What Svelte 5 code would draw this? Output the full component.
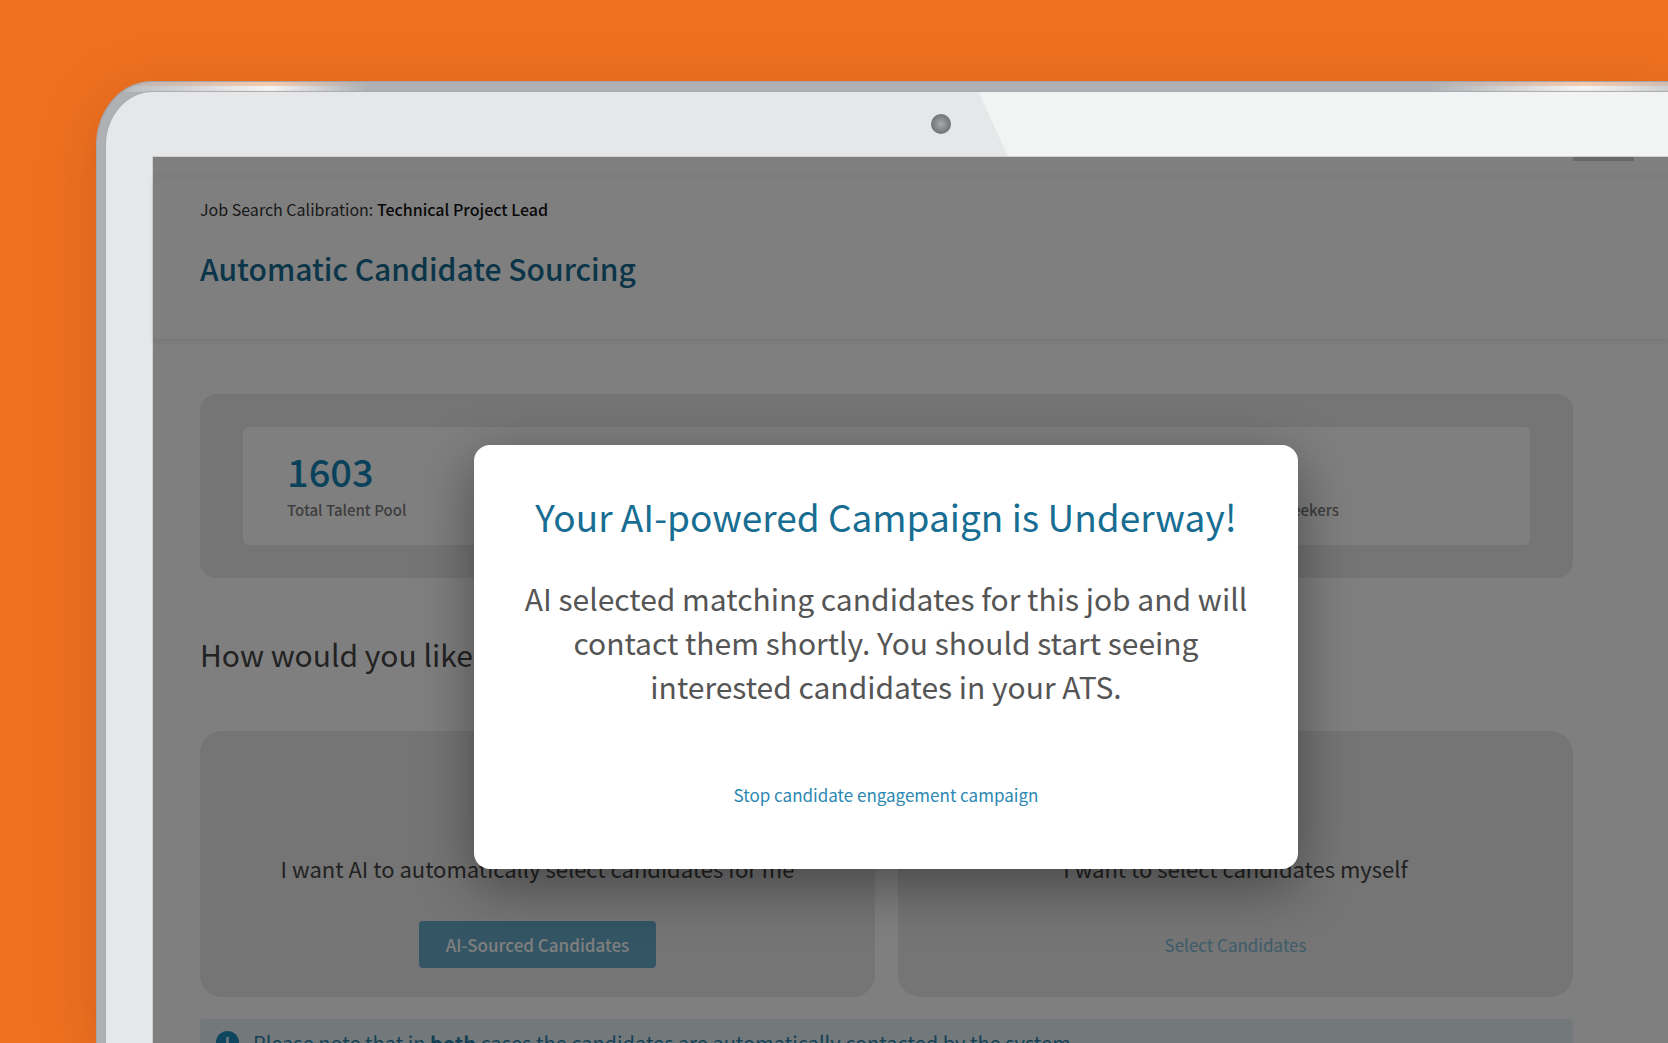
<script>
  let open = true;

  const stats = [
    { value: '1603', label: 'Total Talent Pool' },
    { value: '', label: 'Seekers' }
  ];

  function stopCampaign() {
    open = false;
  }
</script>

<div class="stage">
  <div class="rim">
    <div class="bezel">
      <div class="bezel-top">
        <span class="glare"></span>
        <span class="camera"></span>
      </div>

      <div class="screen">
        <div class="topbar"><span class="tab"></span></div>

        <header>
          <p class="job">Job Search Calibration: <strong>Technical Project Lead</strong></p>
          <h1>Automatic Candidate Sourcing</h1>
        </header>

        <main>
          <section class="pool">
            <div class="stats">
              {#each stats as stat}
                <div class="stat">
                  <span class="value">{stat.value}</span>
                  <span class="label">{stat.label}</span>
                </div>
              {/each}
            </div>
          </section>

          <h2>How would you like</h2>

          <div class="options">
            <section class="option">
              <p>I want AI to automatically select candidates for me</p>
              <button class="primary">AI-Sourced Candidates</button>
            </section>
            <section class="option">
              <p>I want to select candidates myself</p>
              <button class="plain">Select Candidates</button>
            </section>
          </div>

          <div class="notice">
            <svg width="23" height="23" viewBox="0 0 23 23" aria-hidden="true">
              <circle cx="11.5" cy="11.5" r="11.5" fill="#1f8cbe" />
              <path d="M11.5 6v7M11.5 15.5v2.5" stroke="#e6f2f6" stroke-width="2.5" />
            </svg>
            <p>Please note that in <strong>both</strong> cases the candidates are automatically contacted by the system.</p>
          </div>
        </main>

        {#if open}
          <div class="overlay">
            <div class="modal" role="dialog" aria-labelledby="modal-title">
              <h2 id="modal-title">Your AI-powered Campaign is Underway!</h2>
              <p>AI selected matching candidates for this job and will contact them shortly. You should start seeing interested candidates in your ATS.</p>
              <button class="stop" on:click={stopCampaign}>Stop candidate engagement campaign</button>
            </div>
          </div>
        {/if}
      </div>
    </div>
  </div>
</div>

<style>
  :global(body) {
    background: #ef7020;
  }

  .stage {
    box-sizing: border-box;
    height: 100vh;
    padding: 81px 0 0 96px;
    overflow: hidden;
    display: flex;
    background: #ef7020;
    font-family: "Noto Sans CJK SC", "Open Sans", sans-serif;
    color: #4a4a4a;
  }

  h1, h2, p {
    margin: 0;
    font-weight: 400;
  }

  button {
    font-family: inherit;
    border: none;
    background: none;
    cursor: pointer;
  }

  .rim {
    flex: 1;
    display: flex;
    padding: 11px 0 0 10px;
    border-radius: 56px 0 0 0 / 64px 0 0 0;
    background:
      linear-gradient(90deg, transparent, #f7ccb0 64%, transparent) 0 0 / 270px 5px no-repeat,
      linear-gradient(90deg, transparent, #f4f4f4 64%, transparent) 0 5px / 270px 6px no-repeat,
      linear-gradient(90deg, transparent, #f7ccb0 50%, transparent) right -70px top 0 / 310px 5px no-repeat,
      linear-gradient(90deg, transparent, #f4f4f4 50%, transparent) right -70px top 5px / 310px 6px no-repeat,
      #b0b1b5;
    box-shadow: inset 1px 1px 1px #a3a4a8, 0 12px 56px rgba(120, 60, 20, 0.26);
  }

  .bezel {
    flex: 1;
    display: flex;
    flex-direction: column;
    border-radius: 47px 0 0 0 / 53px 0 0 0;
    background: #e6e7e9;
    box-shadow: 0 0 1px 1px #a9aaad;
    overflow: hidden;
  }

  .bezel-top {
    position: relative;
    flex: none;
    height: 64px;
  }

  .glare {
    position: absolute;
    inset: 0 0 0 calc(56% - 2px);
    background: #f2f3f3;
    clip-path: polygon(0 0, 100% 0, 100% 100%, 29px 100%);
  }

  .camera {
    position: absolute;
    top: 22px;
    left: calc(53% - 3px);
    width: 20px;
    height: 20px;
    border-radius: 50%;
    background: radial-gradient(#a8a9ab, #717274 70%);
  }

  .screen {
    position: relative;
    flex: 1;
    margin-left: 46px;
    border: 1px solid #cfd0d1;
    border-width: 1px 0 0 1px;
    background: #fff;
  }

  .topbar {
    display: flex;
    justify-content: flex-end;
    box-sizing: border-box;
    height: 20px;
    padding-right: 34px;
    border-bottom: 2px solid #f8f8f8;
  }

  .tab {
    width: 61px;
    height: 4px;
    background: #d0d0d0;
  }

  header {
    box-sizing: border-box;
    height: 162px;
    padding: 20px 47px 0;
    box-shadow: 0 3px 6px rgba(0, 0, 0, 0.08);
  }

  .job {
    font-size: 16px;
    line-height: 24px;
    color: #333;
  }

  .job strong {
    color: #111;
    font-weight: 500;
  }

  h1 {
    margin-top: 25px;
    font-size: 30px;
    line-height: 44px;
    font-weight: 500;
    color: #166a90;
  }

  main {
    padding: 55px 95px 0 47px;
  }

  .pool {
    padding: 33px 43px;
    border-radius: 16px;
    background: #eaeaea;
  }

  .stats {
    display: flex;
    justify-content: space-between;
    padding: 22px 191px 20px 44px;
    border-radius: 6px;
    background: #fff;
  }

  .stat {
    display: flex;
    flex-direction: column;
  }

  .value {
    height: 46px;
    font-size: 38px;
    line-height: 44px;
    font-weight: 500;
    color: #1484b8;
  }

  .label {
    font-size: 15px;
    line-height: 30px;
    font-weight: 500;
    color: #7c7c7c;
  }

  main h2 {
    margin: 54px 0 55px;
    font-size: 30px;
    line-height: 44px;
    color: #444;
  }

  .options {
    display: grid;
    grid-template-columns: 1fr 1fr;
    gap: 23px;
  }

  .option {
    display: flex;
    flex-direction: column;
    align-items: center;
    padding: 121px 20px 29px;
    border-radius: 22px;
    background: #eaeaea;
  }

  .option p {
    font-size: 22px;
    line-height: 32px;
    color: #444;
  }

  .option button {
    height: 47px;
    margin-top: 37px;
    padding: 0 27px 1px;
    border-radius: 4px;
    font-size: 17px;
  }

  .primary {
    background: #66aac8;
    color: #fff;
    font-weight: 500;
  }

  .plain {
    color: #7db9d5;
  }

  .notice {
    display: flex;
    gap: 14px;
    margin-top: 22px;
    padding: 12px 16px;
    border-radius: 4px;
    background: #e6f2f6;
    color: #2c82ab;
  }

  .notice p {
    font-size: 20px;
    line-height: 24px;
  }

  .notice strong {
    font-weight: 700;
  }

  .overlay {
    position: absolute;
    inset: 0;
    padding: 288px 95px 0 46px;
    background: rgba(0, 0, 0, 0.5);
  }

  .modal {
    box-sizing: border-box;
    display: flex;
    flex-direction: column;
    align-items: center;
    width: 60%;
    margin: 0 auto;
    padding: 43px 50px 54px;
    border-radius: 16px;
    background: #fff;
    box-shadow: 0 16px 56px rgba(0, 0, 0, 0.4);
    text-align: center;
  }

  .modal h2 {
    font-size: 37px;
    line-height: 56px;
    color: #176d92;
  }

  .modal p {
    margin-top: 32px;
    font-size: 30px;
    line-height: 44px;
    color: #555;
  }

  .stop {
    margin-top: 67px;
    padding: 0;
    font-size: 17px;
    line-height: 40px;
    color: #2a88b3;
  }
</style>
